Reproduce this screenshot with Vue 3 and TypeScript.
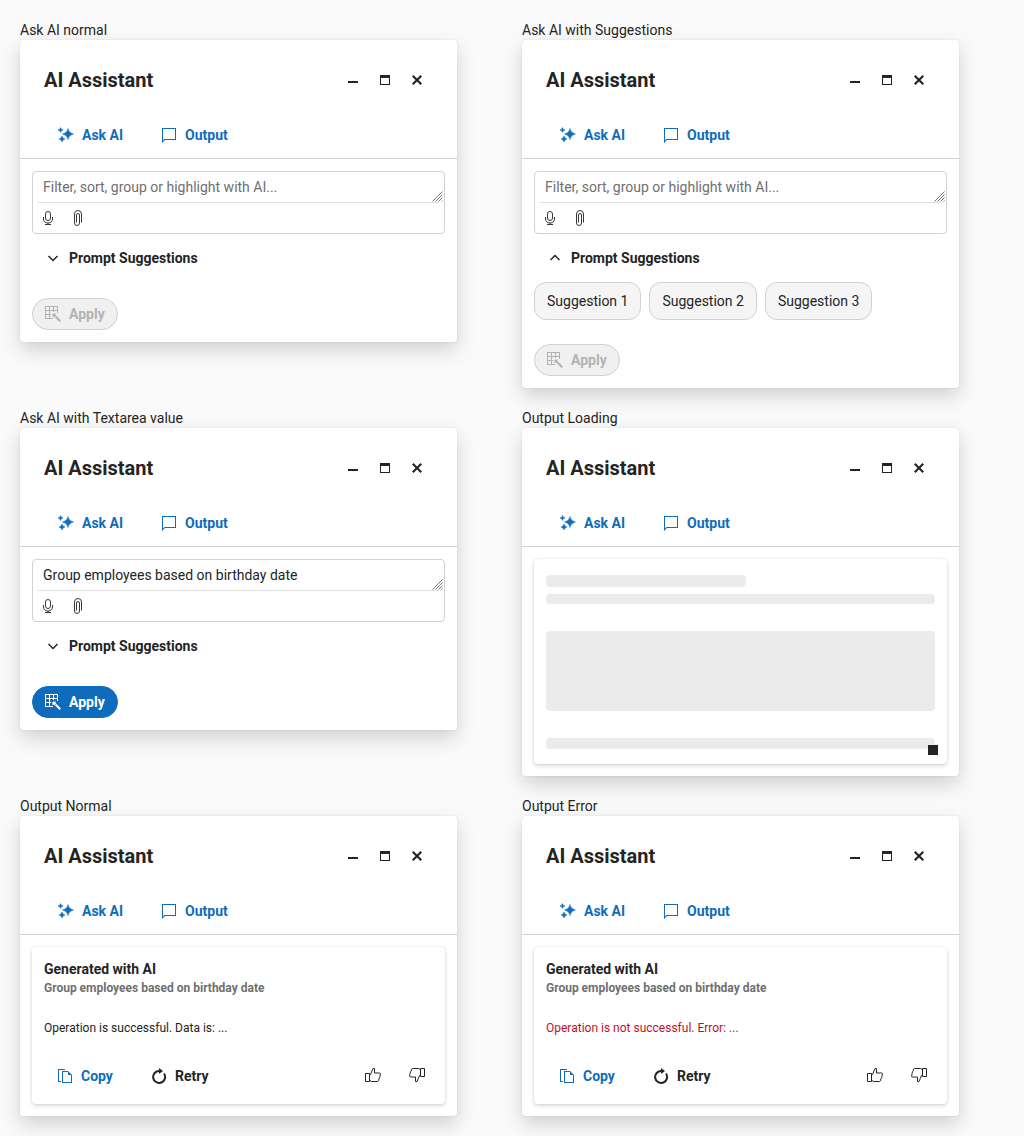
<script setup lang="ts">
type Panel = {
  label: string
  view: 'prompt' | 'loading' | 'result'
  value?: string
  suggestions?: string[]
  message?: string
  error?: boolean
}

const prompt = 'Group employees based on birthday date'

const panels: Panel[] = [
  { label: 'Ask AI normal', view: 'prompt', value: '' },
  {
    label: 'Ask AI with Suggestions',
    view: 'prompt',
    value: '',
    suggestions: ['Suggestion 1', 'Suggestion 2', 'Suggestion 3'],
  },
  { label: 'Ask AI with Textarea value', view: 'prompt', value: prompt },
  { label: 'Output Loading', view: 'loading' },
  { label: 'Output Normal', view: 'result', message: 'Operation is successful. Data is: ...' },
  {
    label: 'Output Error',
    view: 'result',
    message: 'Operation is not successful. Error: ...',
    error: true,
  },
]
</script>

<template>
  <main class="page">
    <section v-for="panel in panels" :key="panel.label" class="cell">
      <span class="label">{{ panel.label }}</span>
      <div class="window">
        <header class="titlebar">
          <span class="title">AI Assistant</span>
          <div class="actions">
            <button class="action" aria-label="Minimize">
              <svg viewBox="0 0 16 16"><path d="M3 9h10v2H3z" /></svg>
            </button>
            <button class="action" aria-label="Maximize">
              <svg viewBox="0 0 16 16"><path fill-rule="evenodd" d="M3 3h10v10H3zM4 6v6h8V6z" /></svg>
            </button>
            <button class="action" aria-label="Close">
              <svg viewBox="0 0 16 16">
                <path d="M13 4.500 9.500 8l3.500 3.500-1.500 1.500L8 9.500 4.500 13 3 11.500 6.500 8 3 4.500 4.500 3 8 6.500 11.500 3z" />
              </svg>
            </button>
          </div>
        </header>

        <nav class="tabs">
          <button class="btn flat primary">
            <svg viewBox="0 0 16 16">
              <path d="M10 1.500Q10.800 6.200 15.500 7 10.800 7.800 10 12.500 9.200 7.800 4.500 7 9.200 6.200 10 1.500zM2.500.5l.8 1.700 1.700.8-1.700.8-.8 1.700-.8-1.700L0 3l1.700-.8zM4 9l1 2 2 1-2 1-1 2-1-2-2-1 2-1z" stroke="currentColor" stroke-width=".5" />
            </svg>
            Ask AI
          </button>
          <button class="btn flat primary output-tab">
            <svg viewBox="0 0 16 16"><path fill-rule="evenodd" d="M1 1h14v12H4l-3 3zM2 2v11.500L3.500 12H14V2z" /></svg>
            Output
          </button>
        </nav>

        <div v-if="panel.view === 'prompt'" class="content">
          <div class="field">
            <textarea :value="panel.value" rows="1" placeholder="Filter, sort, group or highlight with AI..."></textarea>
            <svg viewBox="0 0 11 11" class="grip">
              <path d="M.5 10.500l10-10M3.500 10.500l7-7M6.500 10.500l4-4M9.500 10.500l1-1" />
            </svg>
            <div class="divider"></div>
            <div class="tools">
              <svg viewBox="0 0 16 16" class="line">
                <rect x="5.500" y="1.500" width="5" height="9" rx="2.500" />
                <path d="M3.500 7v2c0 2.500 1.800 4 4.500 4s4.500-1.500 4.500-4V7M8 13v2M5 14.500h6" />
              </svg>
              <svg viewBox="0 0 16 16" class="line">
                <path d="M11.500 12.500V4a3.500 3.500 0 0 0-7 0v9a2.500 2.500 0 0 0 5 0V5a1.500 1.500 0 0 0-3 0v7.500" />
              </svg>
            </div>
          </div>

          <button class="btn flat toggle">
            <svg viewBox="0 0 16 16" class="chevron">
              <path v-if="panel.suggestions" d="m3.500 10 4.500-4.500 4.500 4.500" />
              <path v-else d="m3.500 6 4.500 4.500L12.500 6" />
            </svg>
            Prompt Suggestions
          </button>

          <div v-if="panel.suggestions" class="suggestions">
            <span v-for="item in panel.suggestions" :key="item" class="suggestion">{{ item }}</span>
          </div>

          <button class="btn apply" :class="{ disabled: !panel.value }">
            <svg viewBox="0 0 16 16">
              <path fill-rule="evenodd" d="M0 0h13v7h-1V5H9v1H8V5H5v3h1v1H5v3h3v1H0zM1 1v3h3V1zM5 1v3h3V1zM9 1v3h3V1zM1 5v3h3V5zM1 9v3h3V9z" />
              <path d="m8.500 6.800.8 1 1.500-.5-.3 1.500.8.9-1.300.5-.6 1.200-1-.9-1.400.2.500-1.300-.5-1.300 1.300.1z" />
              <path d="m9.800 11.200 1.500-1.500 4.700 4.700-1.500 1.500z" />
            </svg>
            Apply
          </button>
        </div>

        <div v-else-if="panel.view === 'loading'" class="content">
          <div class="card loading">
            <div class="bone heading"></div>
            <div class="bone"></div>
            <div class="bone block"></div>
            <div class="bone last"></div>
            <span class="stop"></span>
          </div>
        </div>

        <div v-else class="content">
          <div class="card">
            <div class="card-title">Generated with AI</div>
            <div class="card-subtitle">{{ prompt }}</div>
            <div class="message" :class="{ error: panel.error }">{{ panel.message }}</div>
            <div class="card-actions">
              <button class="btn flat primary">
                <svg viewBox="0 0 16 16">
                  <path d="M1 1h7v1H2v11h2v1H1z" />
                  <path fill-rule="evenodd" d="M5 3h6l4 4v8H5zM6 4v10h8V7h-3V4z" />
                </svg>
                Copy
              </button>
              <button class="btn flat retry">
                <svg viewBox="0 0 16 16">
                  <path d="M13 5.500A6 6 0 1 1 8.500 3" fill="none" stroke="currentColor" stroke-width="2" />
                  <path d="M8 0 12 3 8 6z" />
                </svg>
                Retry
              </button>
              <span class="spacer"></span>
              <button class="vote" aria-label="Like">
                <svg viewBox="0 0 16 16" class="line">
                  <path d="M.5 5.500h4v8h-4zM4.500 6.500h1L8 .5h1.500V5h5c1.500 0 1.300 2 .2 2 1 .8.500 2-.3 2 .7.900 0 2-.8 2 .4 1.300-.2 2.500-1.200 2.500h-6L4.500 12" />
                </svg>
              </button>
              <button class="vote" aria-label="Dislike">
                <svg viewBox="0 0 16 16" class="line">
                  <path d="M15.500 8.500h-4v-8h4zM11.500 7.500h-1L8 13.500H6.500V9h-5C0 9 .2 7 1.300 7 .3 6.200.8 5 1.600 5c-.7-.9 0-2 .8-2C2 1.700 2.600.5 3.600.5h6l1.900 1.500" />
                </svg>
              </button>
            </div>
          </div>
        </div>
      </div>
    </section>
  </main>
</template>

<style>
body {
  margin: 0;
  background: #fafafa;
}
</style>

<style scoped>
.page {
  box-sizing: border-box;
  min-height: 1136px;
  padding: 20px;
  display: grid;
  grid-template-columns: repeat(2, 1fr);
  gap: 20px;
  align-items: start;
  align-content: start;
  font-family: Roboto, sans-serif;
  font-size: 14px;
  line-height: 20px;
  color: #242424;
}
.label {
  display: block;
  height: 20px;
}
.window {
  width: 437px;
  background: #fff;
  border-radius: 4px;
  box-shadow: 0 0 2px rgba(0, 0, 0, 0.1), 0 8px 20px rgba(0, 0, 0, 0.17);
}
svg {
  display: block;
  flex: none;
  width: 16px;
  height: 16px;
  fill: currentColor;
}
.line {
  fill: none;
  stroke: currentColor;
}
button {
  font: inherit;
  color: inherit;
  background: none;
  border: 0;
  padding: 0;
}
.titlebar {
  display: flex;
  align-items: center;
  justify-content: space-between;
  height: 80px;
  padding: 0 24px;
}
.title {
  font-size: 20px;
  font-weight: 700;
  line-height: 28px;
}
.actions {
  display: flex;
}
.action {
  width: 32px;
  height: 32px;
  display: grid;
  place-items: center;
}
.tabs {
  display: flex;
  height: 38px;
  padding: 0 25px;
  align-items: flex-start;
  border-bottom: 1px solid #d1d1d1;
}
.btn {
  box-sizing: border-box;
  display: inline-flex;
  align-items: center;
  gap: 8px;
  height: 32px;
  padding: 0 13px;
  font-weight: 700;
  white-space: nowrap;
}
.primary {
  color: #0f6cbd;
}
.tabs .btn {
  margin-top: -1px;
}
.tabs .output-tab {
  margin-left: 12px;
}
.content {
  padding: 12px;
}
.field {
  position: relative;
  box-sizing: border-box;
  height: 63px;
  border: 1px solid #d1d1d1;
  border-radius: 4px;
}
textarea {
  display: block;
  box-sizing: border-box;
  width: 100%;
  height: 30px;
  padding: 5px 10px;
  border: 0;
  outline: 0;
  resize: none;
  overflow: hidden;
  background: none;
  font: inherit;
  color: inherit;
}
textarea::placeholder {
  color: #707070;
}
.grip {
  position: absolute;
  top: 19px;
  right: 1px;
  width: 11px;
  height: 11px;
  fill: none;
  stroke: #757575;
  stroke-width: 1;
}
.divider {
  height: 1px;
  margin: 0 5px;
  background: #e0e0e0;
}
.tools {
  display: flex;
  gap: 14px;
  padding: 7px;
  color: #383838;
}
.toggle {
  margin-top: 8px;
  display: flex;
}
.chevron {
  fill: none;
  stroke: currentColor;
  stroke-width: 1.500;
}
.suggestions {
  display: flex;
  gap: 8px;
  margin-top: 8px;
}
.suggestion {
  padding: 8px 12px;
  border: 1px solid #d1d1d1;
  border-radius: 12px;
  background: #f5f5f5;
}
.apply {
  display: flex;
  margin-top: 24px;
  border: 1px solid #0f6cbd;
  border-radius: 16px;
  padding: 0 12px;
  color: #fff;
  background: #0f6cbd;
}
.apply.disabled {
  color: #b3b3b3;
  background: #f0f0f0;
  border-color: #d1d1d1;
}
.card {
  box-sizing: border-box;
  height: 157px;
  padding: 12px;
  border-radius: 4px;
  background: #fff;
  box-shadow: 0 0 2px rgba(0, 0, 0, 0.12), 0 2px 4px rgba(0, 0, 0, 0.14);
}
.card-title {
  font-weight: 700;
}
.card-subtitle {
  padding-top: 1px;
  font-size: 12px;
  line-height: 16px;
  font-weight: 700;
  color: #707070;
}
.message {
  margin-top: 24px;
  font-size: 12px;
  line-height: 16px;
}
.error {
  color: #c50f1f;
}
.card-actions {
  display: flex;
  align-items: center;
  margin-top: 24px;
}
.retry {
  margin-left: 12px;
}
.spacer {
  flex: 1;
}
.vote {
  width: 32px;
  height: 32px;
  display: grid;
  place-items: center;
  margin-left: 12px;
}
.loading {
  position: relative;
  height: 205px;
  padding-top: 16px;
}
.bone {
  height: 10px;
  border-radius: 4px;
  background: #ebebeb;
}
.heading {
  width: 200px;
  height: 12px;
  margin-bottom: 7px;
}
.block {
  height: 80px;
  margin: 27px 0;
}
.last {
  height: 11px;
}
.stop {
  position: absolute;
  right: 9px;
  bottom: 9px;
  width: 10px;
  height: 10px;
  background: #242424;
}
</style>
